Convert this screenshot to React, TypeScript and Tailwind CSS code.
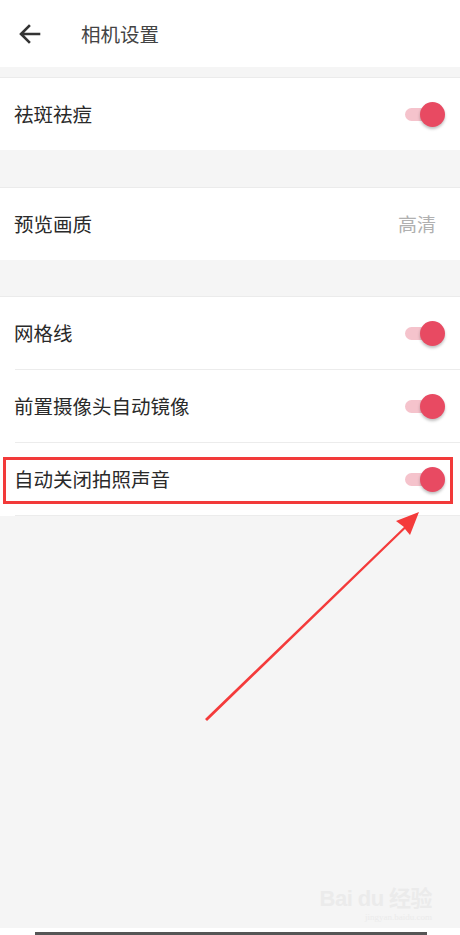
import React from "react";

function Toggle() {
  return (
    <div className="relative w-[40px] h-[25px] shrink-0">
      <div className="absolute left-0 top-[6px] w-[28px] h-[13px] rounded-full bg-[#f5c3cc]" />
      <div className="absolute right-0 top-0 w-[25px] h-[25px] rounded-full bg-[#e84a62] shadow-[0_2px_3px_rgba(0,0,0,0.25)]" />
    </div>
  );
}

function Row({ label, right, divider }: { label: string; right: React.ReactNode; divider?: boolean }) {
  return (
    <div className="bg-white">
      <div className="h-[72px] flex items-center justify-between pl-[14px] pr-[15px]">
        <span className="text-[19.5px] text-[#2a2a2a]">{label}</span>
        {right}
      </div>
      {divider && <div className="ml-[15px] h-px bg-[#ececec]" />}
    </div>
  );
}

export default function App() {
  return (
    <div
      className="relative w-[460px] h-[935px] bg-[#f5f5f5] overflow-hidden flex flex-col"
      style={{ fontFamily: '"Noto Sans CJK SC", "Noto Sans", sans-serif' }}
    >
      <div className="h-[67px] bg-white flex items-center shrink-0">
        <svg width="22" height="20" viewBox="0 0 22 20" className="ml-[19px]">
          <path d="M20 10H3M10 2L2 10l8 8" fill="none" stroke="#333" strokeWidth="2.6" strokeLinecap="square" />
        </svg>
        <span className="ml-[40px] text-[19.5px] text-[#444]">相机设置</span>
      </div>
      <div className="h-[10px] shrink-0" />
      <div className="border-t border-[#ebebeb]">
        <Row label="祛斑祛痘" right={<Toggle />} />
      </div>
      <div className="h-[37px] shrink-0" />
      <div className="border-t border-[#ebebeb]">
        <Row label="预览画质" right={<span className="text-[19px] text-[#b0b0b0] mr-[9px]">高清</span>} />
      </div>
      <div className="h-[36px] shrink-0" />
      <div className="border-t border-[#ebebeb]">
        <Row label="网格线" right={<Toggle />} divider />
        <Row label="前置摄像头自动镜像" right={<Toggle />} divider />
        <Row label="自动关闭拍照声音" right={<Toggle />} divider />
      </div>
      <div className="flex-1" />
      <div className="flex flex-col items-end pr-[28px] pb-[6px] text-[#ebebeb] leading-none">
        <span className="text-[22px] font-bold tracking-tight" style={{ fontFamily: '"Liberation Sans", "Noto Sans CJK SC", sans-serif' }}>Bai du 经验</span>
        <span className="text-[9px] mt-[3px]" style={{ fontFamily: '"Liberation Serif", serif' }}>jingyan.baidu.com</span>
      </div>
      <div className="h-[4px] bg-white shrink-0" />
      <div className="h-[3px] bg-white shrink-0 pl-[35px] pr-[33px]">
        <div className="h-full bg-[#555]" />
      </div>

      <div className="absolute left-[3px] top-[457px] w-[450px] h-[47px] border-[3px] border-[#f23a3a]" />
      <svg className="absolute left-0 top-0" width="460" height="935" viewBox="0 0 460 935">
        <polygon points="205,719 404,527 396,521 419,512 410,535 405,529 207,721" fill="#f43b3b" />
      </svg>
    </div>
  );
}
